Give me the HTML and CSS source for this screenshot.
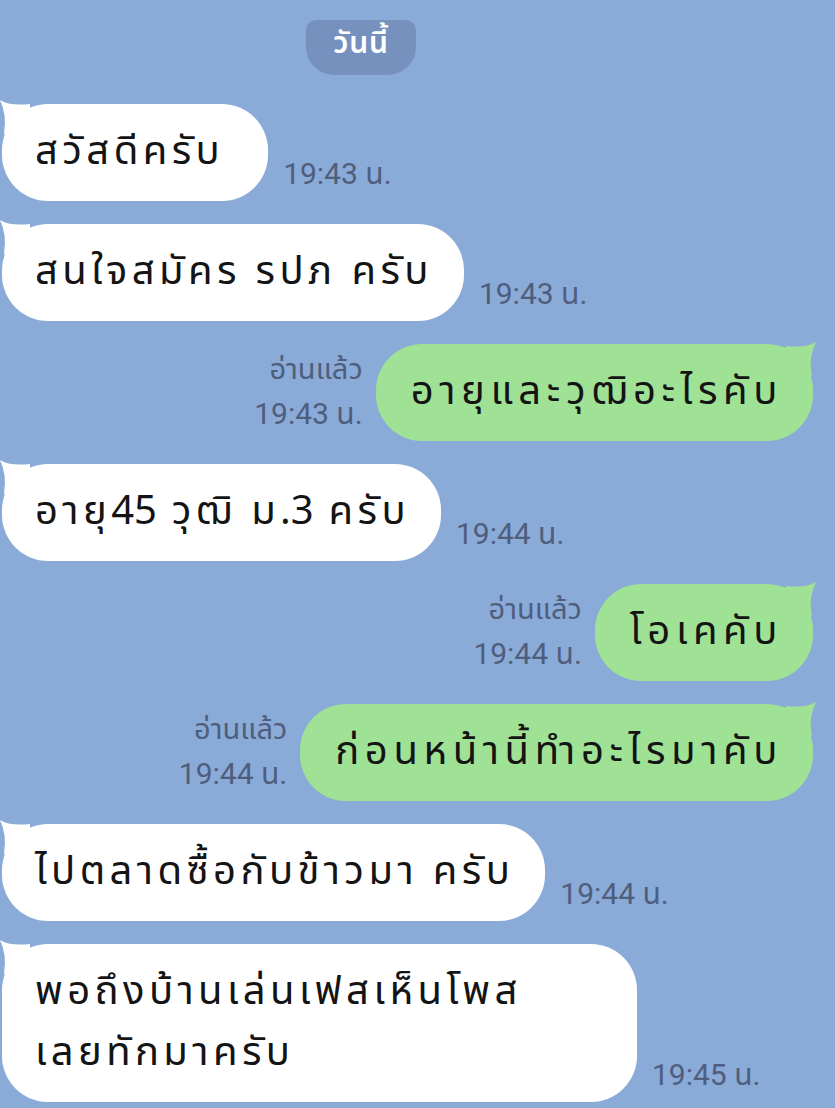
FILE: index.html
```html
<!DOCTYPE html>
<html lang="th">
<head>
<meta charset="utf-8">
<title>Chat</title>
<link rel="stylesheet" href="styles.css">
</head>
<body>
<div class="chat">
  <div class="date-row"><div class="date">วันนี้</div></div>

  <div class="row in">
    <div class="bubble wide">สวัสดีครับ</div>
    <div class="meta"><span class="time">19:43 น.</span></div>
  </div>

  <div class="row in">
    <div class="bubble">สนใจสมัคร รปภ ครับ</div>
    <div class="meta"><span class="time">19:43 น.</span></div>
  </div>

  <div class="row out">
    <div class="meta"><span class="read">อ่านแล้ว</span><span class="time">19:43 น.</span></div>
    <div class="bubble">อายุและวุฒิอะไรคับ</div>
  </div>

  <div class="row in">
    <div class="bubble">อายุ<span class="num">45</span> วุฒิ ม<span class="num">.3</span> ครับ</div>
    <div class="meta"><span class="time">19:44 น.</span></div>
  </div>

  <div class="row out">
    <div class="meta"><span class="read">อ่านแล้ว</span><span class="time">19:44 น.</span></div>
    <div class="bubble">โอเคคับ</div>
  </div>

  <div class="row out">
    <div class="meta"><span class="read">อ่านแล้ว</span><span class="time">19:44 น.</span></div>
    <div class="bubble">ก่อนหน้านี้ทำอะไรมาคับ</div>
  </div>

  <div class="row in">
    <div class="bubble">ไปตลาดซื้อกับข้าวมา ครับ</div>
    <div class="meta"><span class="time">19:44 น.</span></div>
  </div>

  <div class="row in">
    <div class="bubble long">พอถึงบ้านเล่นเฟสเห็นโพส<br>เลยทักมาครับ</div>
    <div class="meta"><span class="time">19:45 น.</span></div>
  </div>
</div>
</body>
</html>
```
FILE: styles.css
```css
html, body {
  margin: 0;
  padding: 0;
}
body {
  width: 835px;
  height: 1108px;
  overflow: hidden;
  background: #8aaad8;
  font-family: "Noto Sans Thai", "Noto Sans", "DejaVu Sans", sans-serif;
}
.chat {
  display: flex;
  flex-direction: column;
  gap: 23px;
  padding: 0 22px 0 2px;
}
.date-row {
  display: flex;
  justify-content: flex-start;
  padding: 20px 0 0 304px;
  margin-bottom: 6px;
}
.date {
  width: 110px;
  height: 55px;
  background: #7791bf;
  color: #fff;
  font-size: 30px;
  font-weight: 600;
  letter-spacing: 0.8px;
  text-align: center;
  line-height: 48px;
  border-radius: 10px 10px 28px 28px;
}
.row {
  display: flex;
  align-items: flex-end;
}
.row.out {
  justify-content: flex-end;
}
.bubble {
  position: relative;
  font-size: 40px;
  letter-spacing: 4.4px;
  line-height: 61px;
  padding: 18px 31px 18px 33px;
  border-radius: 46px;
  color: #141414;
  background: #fff;
}
.bubble.wide {
  padding-right: 44px;
}
.bubble.long {
  width: 571px;
}
.bubble .num {
  letter-spacing: 0;
}
.row.in .bubble::before {
  content: "";
  position: absolute;
  left: -2px;
  top: -4px;
  width: 30px;
  height: 34px;
  background: #fff;
  clip-path: path("M0 0 Q 9 6 30 4 L 30 34 L 4 34 Q 7 14 0 0 Z");
}
.row.out .bubble {
  background: #9fe195;
  letter-spacing: 5.6px;
  padding: 18px 30px 18px 35px;
}
.row.out .bubble::after {
  content: "";
  position: absolute;
  right: -3px;
  top: -2px;
  width: 30px;
  height: 34px;
  background: #9fe195;
  clip-path: path("M30 0 Q 22 16 26 34 L 0 34 L 0 4 Q 20 6 30 0 Z");
}
.meta {
  display: flex;
  flex-direction: column;
  gap: 7px;
  font-family: Roboto, "Noto Sans Thai", sans-serif;
  font-size: 30px;
  line-height: 38px;
  color: #4e5e7c;
  padding-bottom: 8px;
}
.row.in .meta {
  margin-left: 15px;
}
.row.out .meta {
  align-items: flex-end;
  margin-right: 13px;
}
.read {
  font-size: 29px;
}
```
